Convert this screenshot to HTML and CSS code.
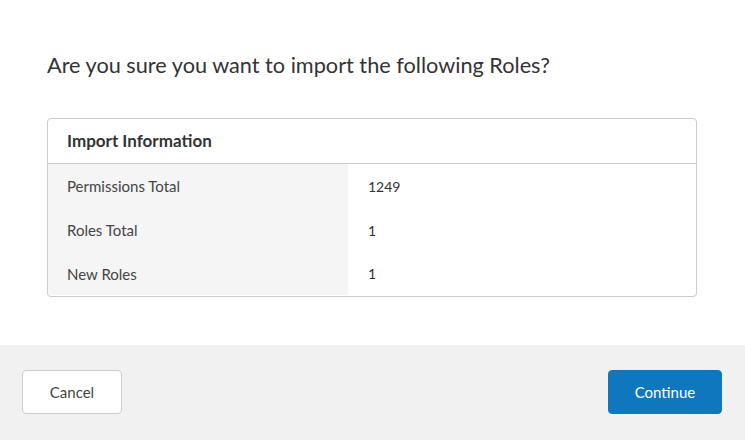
FILE: index.html
```html
<!DOCTYPE html>
<html>
<head>
<meta charset="utf-8">
<link rel="stylesheet" href="styles.css">
</head>
<body>
<div class="dialog">
  <div class="content">
    <h1 class="title">Are you sure you want to import the following Roles?</h1>
    <div class="card">
      <div class="card-head">Import Information</div>
      <div class="rows">
        <div class="label">Permissions Total</div><div class="value">1249</div>
        <div class="label">Roles Total</div><div class="value">1</div>
        <div class="label">New Roles</div><div class="value">1</div>
      </div>
    </div>
  </div>
  <div class="footer">
    <button class="btn btn-cancel">Cancel</button>
    <button class="btn btn-primary">Continue</button>
  </div>
</div>
</body>
</html>
```
FILE: styles.css
```css
html, body {
  margin: 0;
  padding: 0;
  background: #fff;
  font-family: "Lato", "Open Sans", sans-serif;
  color: #333;
}
.dialog {
  width: 745px;
  height: 440px;
  display: flex;
  flex-direction: column;
}
.content {
  height: 345px;
  box-sizing: border-box;
  padding: 51px 48px 0 47px;
}
.title {
  margin: 0;
  font-size: 21.7px;
  font-weight: 400;
  line-height: 28px;
  color: #333;
}
.card {
  margin-top: 39px;
  border: 1px solid #ccc;
  border-radius: 4px;
  overflow: hidden;
}
.card-head {
  height: 44px;
  line-height: 44px;
  padding-left: 19px;
  font-size: 17px;
  font-weight: 700;
  color: #333;
  border-bottom: 1px solid #ccc;
}
.rows {
  display: grid;
  grid-template-columns: 300px 1fr;
  grid-auto-rows: 44px;
  font-size: 15px;
}
.rows > div {
  display: flex;
  align-items: center;
}
.rows > div:nth-last-child(-n+2) {
  height: 43px;
}
.label {
  background: #f5f5f5;
  padding-left: 19px;
  color: #444;
}
.value {
  padding-left: 20px;
  font-size: 14px;
  color: #333;
}
.footer {
  flex: 1;
  background: #f1f1f1;
  display: flex;
  justify-content: space-between;
  align-items: flex-start;
  padding: 25px 23px 0 22px;
}
.btn {
  height: 44px;
  border-radius: 4px;
  font-family: inherit;
  font-size: 15px;
  cursor: pointer;
}
.btn-cancel {
  width: 100px;
  background: #fff;
  border: 1px solid #ccc;
  color: #444;
}
.btn-primary {
  width: 114px;
  background: #0e77bd;
  border: 1px solid #0e77bd;
  color: #fff;
}
```
